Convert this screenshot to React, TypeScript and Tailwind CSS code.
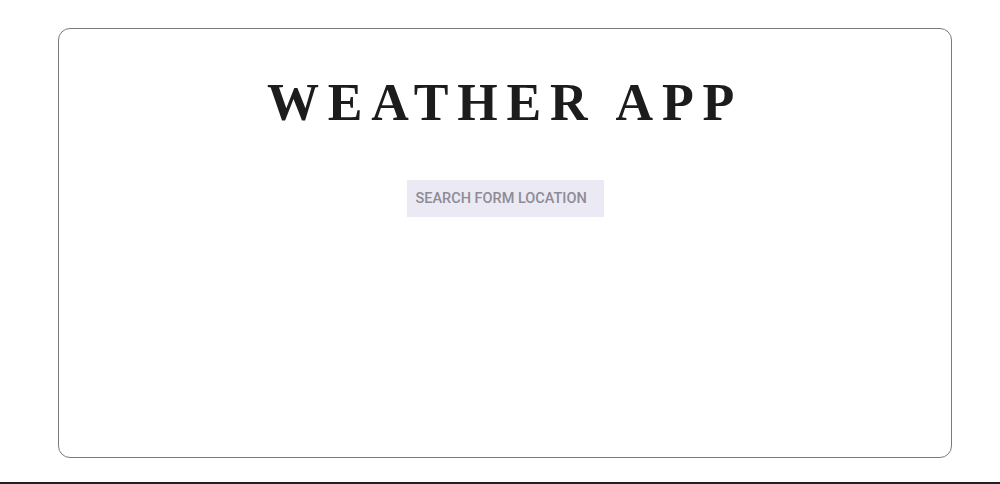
export default function App() {
  return (
    <div className="h-[484px] w-full border-b-2 border-[#222] bg-white pt-[28px]">
      <div className="ml-[58px] flex h-[430px] w-[894px] flex-col items-center rounded-[12px] border-[1.5px] border-[#7a7a7a] bg-white">
        <h1
          className="mt-[44px] text-[52px] font-bold leading-[60px] tracking-[0.17em] text-[#1c1c1c]"
          style={{ fontFamily: '"Liberation Serif", serif' }}
        >
          WEATHER APP
        </h1>
        <input
          type="text"
          placeholder="SEARCH FORM LOCATION"
          className="mt-[47px] h-[37px] w-[197px] bg-[#ebe9f3] px-[9px] text-[14.5px] font-medium text-[#333] outline-none placeholder:text-[#8d8c95]"
          style={{ fontFamily: 'Roboto, sans-serif' }}
        />
      </div>
    </div>
  );
}
